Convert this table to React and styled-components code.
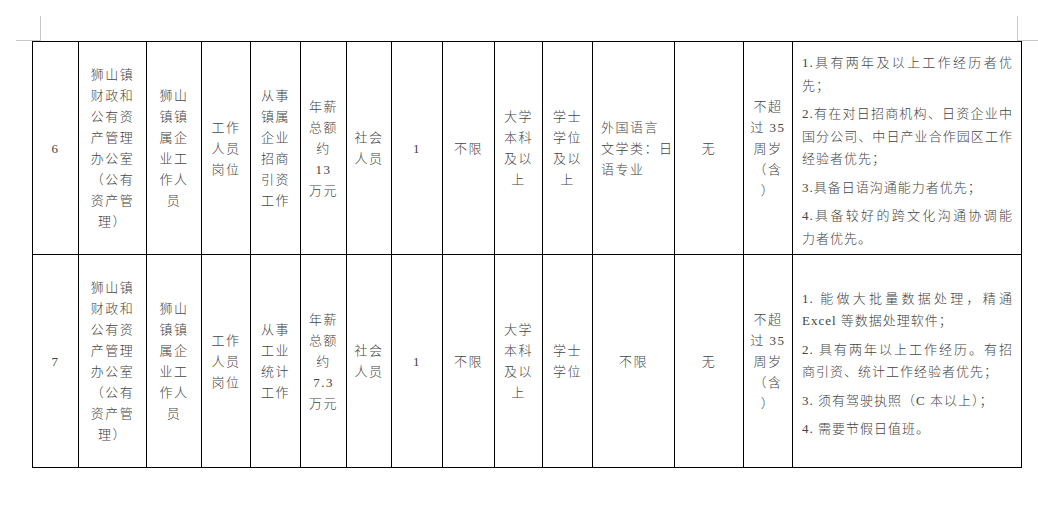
import React from 'react';
import styled, { createGlobalStyle } from 'styled-components';

const GlobalStyle = createGlobalStyle`
  html, body {
    margin: 0;
    padding: 0;
    background: #ffffff;
  }
  body {
    font-family: "Liberation Serif", "Noto Sans CJK SC", serif;
    color: #444444;
  }
`;

const Page = styled.div`
  width: 1038px;
  height: 515px;
  padding: 16px 0 0 16px;
  box-sizing: border-box;
  overflow: hidden;
`;

// page-margin crop marks above the table
const MarginBar = styled.div`
  display: flex;
  justify-content: space-between;
  height: 25px;
`;

const Corner = styled.div`
  box-sizing: border-box;
  width: ${(p) => p.$w}px;
  height: 25px;
  border-bottom: 1px solid #c8c8c8;
  ${(p) => (p.$side === 'left' ? 'border-right' : 'border-left')}: 1px solid #c8c8c8;
`;

const Table = styled.table`
  width: 990px;
  margin-left: 16px;
  border-collapse: collapse;
  table-layout: fixed;
`;

const Row = styled.tr`
  height: 213px;
`;

const Cell = styled.td`
  border: 1px solid #000;
  padding: 0 ${(p) => (p.$left ? 8 : 6)}px;
  vertical-align: middle;
  text-align: ${(p) => (p.$left ? 'left' : 'center')};
  font-size: 13px;
  line-height: 21px;
  letter-spacing: 1.5px;
  font-weight: 300;
  white-space: nowrap;
`;

const NoteCell = styled.td`
  border: 1px solid #000;
  padding: 0 8px 0 9px;
  vertical-align: middle;
  font-size: 13px;
  line-height: 22.5px;
  letter-spacing: 1px;
  font-weight: 300;
  white-space: nowrap;
`;

const Para = styled.div`
  margin-top: 6px;
`;

const Line = styled.div`
  text-align: ${(p) => (p.$justify ? 'justify' : 'left')};
  text-align-last: ${(p) => (p.$justify ? 'justify' : 'left')};
  white-space: ${(p) => (p.$justify ? 'normal' : 'nowrap')};
`;

const widths = [46, 68, 55, 49, 50, 46, 45, 51, 52, 48, 50, 82, 69, 49, 229];

const rows = [
  {
    cells: [
      ['6'],
      ['狮山镇', '财政和', '公有资', '产管理', '办公室', '（公有', '资产管', '理）'],
      ['狮山', '镇镇', '属企', '业工', '作人', '员'],
      ['工作', '人员', '岗位'],
      ['从事', '镇属', '企业', '招商', '引资', '工作'],
      ['年薪', '总额', '约', '13', '万元'],
      ['社会', '人员'],
      ['1'],
      ['不限'],
      ['大学', '本科', '及以', '上'],
      ['学士', '学位', '及以', '上'],
      { left: true, lines: ['外国语言', '文学类：日', '语专业'] },
      ['无'],
      ['不超', '过 35', '周岁', '（含', '）'],
    ],
    notes: [
      ['1.具有两年及以上工作经历者优', '先；'],
      ['2.有在对日招商机构、日资企业中', '国分公司、中日产业合作园区工作', '经验者优先；'],
      ['3.具备日语沟通能力者优先；'],
      ['4.具备较好的跨文化沟通协调能', '力者优先。'],
    ],
  },
  {
    cells: [
      ['7'],
      ['狮山镇', '财政和', '公有资', '产管理', '办公室', '（公有', '资产管', '理）'],
      ['狮山', '镇镇', '属企', '业工', '作人', '员'],
      ['工作', '人员', '岗位'],
      ['从事', '工业', '统计', '工作'],
      ['年薪', '总额', '约', '7.3', '万元'],
      ['社会', '人员'],
      ['1'],
      ['不限'],
      ['大学', '本科', '及以', '上'],
      ['学士', '学位'],
      ['不限'],
      ['无'],
      ['不超', '过 35', '周岁', '（含', '）'],
    ],
    notes: [
      ['1. 能做大批量数据处理，精通', 'Excel 等数据处理软件；'],
      ['2. 具有两年以上工作经历。有招', '商引资、统计工作经验者优先；'],
      ['3. 须有驾驶执照（C 本以上）；'],
      ['4. 需要节假日值班。'],
    ],
  },
];

function TextCell({ data }) {
  const left = !Array.isArray(data) && data.left;
  const lines = Array.isArray(data) ? data : data.lines;
  return (
    <Cell $left={left}>
      {lines.map((l, i) => (
        <div key={i}>{l}</div>
      ))}
    </Cell>
  );
}

function Notes({ paras }) {
  return (
    <NoteCell>
      {paras.map((p, i) => (
        <Para key={i}>
          {p.map((l, j) => (
            <Line key={j} $justify={j < p.length - 1}>
              {l}
            </Line>
          ))}
        </Para>
      ))}
    </NoteCell>
  );
}

export default function App() {
  return (
    <>
      <GlobalStyle />
      <Page>
        <MarginBar>
          <Corner $side="left" $w={25} />
          <Corner $side="right" $w={21} />
        </MarginBar>
        <Table>
          <colgroup>
            {widths.map((w, i) => (
              <col key={i} style={{ width: w }} />
            ))}
          </colgroup>
          <tbody>
            {rows.map((r, i) => (
              <Row key={i}>
                {r.cells.map((c, j) => (
                  <TextCell key={j} data={c} />
                ))}
                <Notes paras={r.notes} />
              </Row>
            ))}
          </tbody>
        </Table>
      </Page>
    </>
  );
}
